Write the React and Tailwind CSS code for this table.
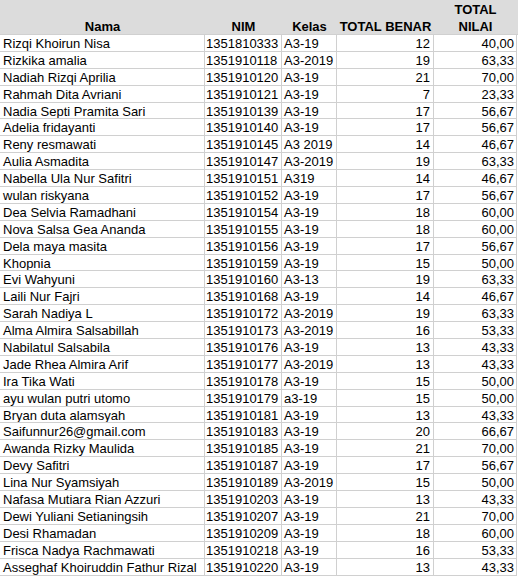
import React from 'react';

const rows = [
    ['Rizqi Khoirun Nisa', '1351810333', 'A3-19', 12, '40,00'],
    ['Rizkika amalia', '1351910118', 'A3-2019', 19, '63,33'],
    ['Nadiah Rizqi Aprilia', '1351910120', 'A3-19', 21, '70,00'],
    ['Rahmah Dita Avriani', '1351910121', 'A3-19', 7, '23,33'],
    ['Nadia Septi Pramita Sari', '1351910139', 'A3-19', 17, '56,67'],
    ['Adelia fridayanti', '1351910140', 'A3-19', 17, '56,67'],
    ['Reny resmawati', '1351910145', 'A3 2019', 14, '46,67'],
    ['Aulia Asmadita', '1351910147', 'A3-2019', 19, '63,33'],
    ['Nabella Ula Nur Safitri', '1351910151', 'A319', 14, '46,67'],
    ['wulan riskyana', '1351910152', 'A3-19', 17, '56,67'],
    ['Dea Selvia Ramadhani', '1351910154', 'A3-19', 18, '60,00'],
    ['Nova Salsa Gea Ananda', '1351910155', 'A3-19', 18, '60,00'],
    ['Dela maya masita', '1351910156', 'A3-19', 17, '56,67'],
    ['Khopnia', '1351910159', 'A3-19', 15, '50,00'],
    ['Evi Wahyuni', '1351910160', 'A3-13', 19, '63,33'],
    ['Laili Nur Fajri', '1351910168', 'A3-19', 14, '46,67'],
    ['Sarah Nadiya L', '1351910172', 'A3-2019', 19, '63,33'],
    ['Alma Almira Salsabillah', '1351910173', 'A3-2019', 16, '53,33'],
    ['Nabilatul Salsabila', '1351910176', 'A3-19', 13, '43,33'],
    ['Jade Rhea Almira Arif', '1351910177', 'A3-2019', 13, '43,33'],
    ['Ira Tika Wati', '1351910178', 'A3-19', 15, '50,00'],
    ['ayu wulan putri utomo', '1351910179', 'a3-19', 15, '50,00'],
    ['Bryan duta alamsyah', '1351910181', 'A3-19', 13, '43,33'],
    ['Saifunnur26@gmail.com', '1351910183', 'A3-19', 20, '66,67'],
    ['Awanda Rizky Maulida', '1351910185', 'A3-19', 21, '70,00'],
    ['Devy Safitri', '1351910187', 'A3-19', 17, '56,67'],
    ['Lina Nur Syamsiyah', '1351910189', 'A3-2019', 15, '50,00'],
    ['Nafasa Mutiara Rian Azzuri', '1351910203', 'A3-19', 13, '43,33'],
    ['Dewi Yuliani Setianingsih', '1351910207', 'A3-19', 21, '70,00'],
    ['Desi Rhamadan', '1351910209', 'A3-19', 18, '60,00'],
    ['Frisca Nadya Rachmawati', '1351910218', 'A3-19', 16, '53,33'],
    ['Asseghaf Khoiruddin Fathur Rizal', '1351910220', 'A3-19', 13, '43,33'],
];

const cols = 'grid grid-cols-[205px_77px_55px_97px_83px]';
const cell = 'h-[16.9px] border-r border-b border-[#d0d0d0] leading-[18px] whitespace-nowrap overflow-hidden';

function App() {
    return (
        <div className="w-[518px] h-[579px] bg-white text-black text-[13px] font-['Liberation_Sans',Arial,sans-serif] overflow-hidden">
            {/* header */}
            <div className="bg-[#dcdcdc] border-b border-[#d0d0d0] h-[35px] overflow-hidden">
                <div className={`${cols} h-[34px] font-bold leading-[17px] translate-y-[1px]`}>
                    <div className="flex items-end justify-center">Nama</div>
                    <div className="flex items-end justify-center">NIM</div>
                    <div className="flex items-end justify-center">Kelas</div>
                    <div className="flex items-end justify-center">TOTAL BENAR</div>
                    <div className="flex flex-col items-center justify-end">
                        <span>TOTAL</span>
                        <span>NILAI</span>
                    </div>
                </div>
            </div>

            {rows.map((r, i) => (
                <div key={i} className={cols}>
                    <div className={`${cell} px-[3px]`}>{r[0]}</div>
                    <div className={`${cell} pl-[1px]`}>{r[1]}</div>
                    <div className={`${cell} pl-[2px]`}>{r[2]}</div>
                    <div className={`${cell} pr-[3px] text-right`}>{r[3]}</div>
                    <div className={`${cell} pr-[2px] text-right`}>{r[4]}</div>
                </div>
            ))}
        </div>
    );
}

export default App;
